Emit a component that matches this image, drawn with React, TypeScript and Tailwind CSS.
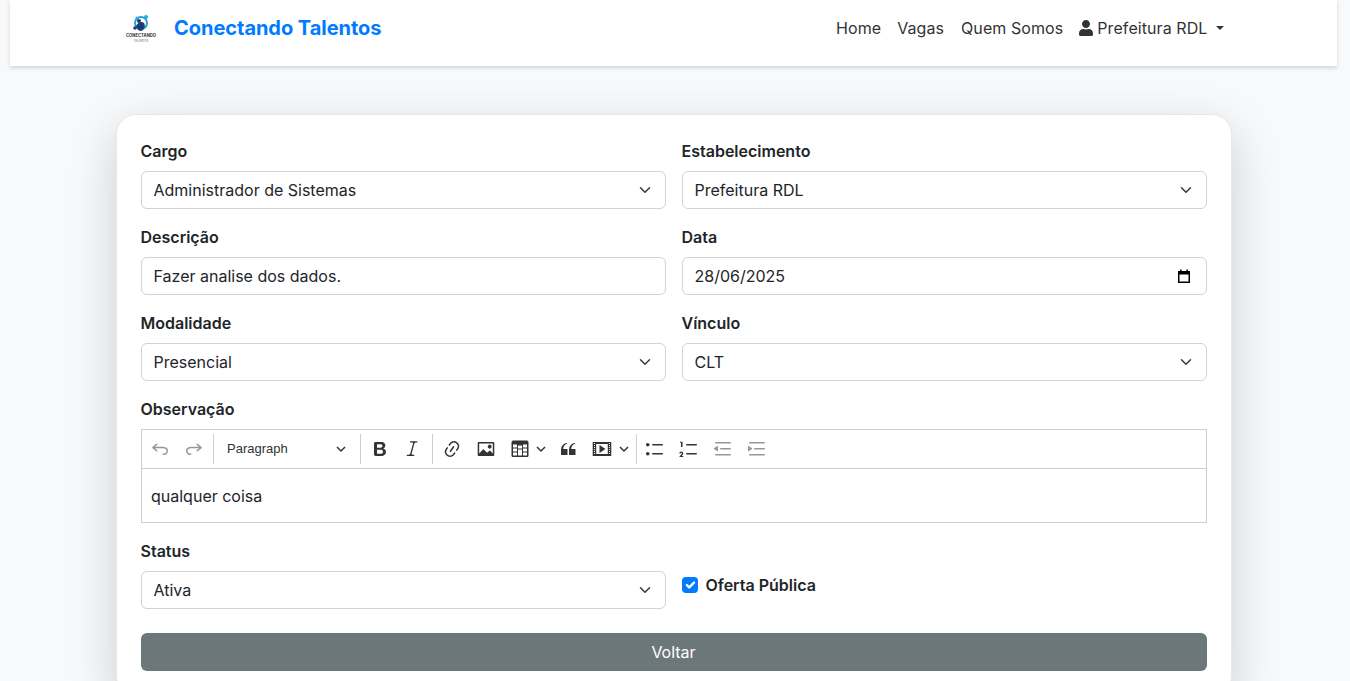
import { FaUser } from "react-icons/fa";

const P = {
  undo: "m5.042 9.367 2.189 1.837a.75.75 0 0 1-.965 1.149l-3.788-3.18a.747.747 0 0 1-.21-.284.75.75 0 0 1 .17-.945L6.23 4.762a.75.75 0 1 1 .964 1.15L4.863 7.866h8.917A.75.75 0 0 1 14 7.9a4 4 0 1 1-1.477 7.718l.344-1.489a2.5 2.5 0 1 0 1.094-4.73l.008-.032H5.042z",
  redo: "m14.958 9.367-2.189 1.837a.75.75 0 0 0 .965 1.149l3.788-3.18a.747.747 0 0 0 .21-.284.75.75 0 0 0-.17-.945L13.77 4.762a.75.75 0 1 0-.964 1.15l2.331 1.955H6.22A.75.75 0 0 0 6 7.9a4 4 0 1 0 1.477 7.718l-.344-1.489A2.5 2.5 0 1 1 6.039 9.4l-.008-.032h8.927z",
  bold: "M10.187 17H5.773c-.637 0-1.092-.138-1.364-.415-.273-.277-.409-.718-.409-1.323V4.738c0-.617.14-1.062.419-1.332.279-.27.73-.406 1.354-.406h4.68c.69 0 1.288.041 1.793.124.506.083.96.242 1.36.478.341.197.644.447.906.75a3.262 3.262 0 0 1 .808 2.162c0 1.401-.722 2.426-2.167 3.075C15.05 10.175 16 11.315 16 13.01a3.756 3.756 0 0 1-2.296 3.504 6.1 6.1 0 0 1-1.517.377c-.571.073-1.238.11-2 .11zm-.217-6.217H7v4.087h3.069c1.977 0 2.965-.69 2.965-2.072 0-.707-.256-1.22-.768-1.537-.512-.319-1.277-.478-2.296-.478zM7 5.13v3.619h2.606c.729 0 1.292-.067 1.69-.2a1.6 1.6 0 0 0 .91-.765c.165-.267.247-.566.247-.897 0-.707-.26-1.176-.778-1.409-.519-.232-1.31-.348-2.375-.348H7z",
  italic: "m9.586 14.633.021.004c-.036.335.095.655.393.962.082.083.173.15.274.201h1.474a.6.6 0 1 1 0 1.2H5.304a.6.6 0 0 1 0-1.2h1.15c.474-.07.809-.182 1.005-.334.196-.151.357-.316.483-.494.126-.178.23-.355.31-.531.08-.176.126-.29.14-.343l2.613-9.283a1.72 1.72 0 0 0 .011-.533c-.03-.235-.15-.443-.361-.623a.767.767 0 0 0-.376-.17H8.6a.6.6 0 1 1 0-1.2h6.295a.6.6 0 0 1 0 1.2h-1.1c-.59.057-.96.203-1.11.438-.15.234-.264.49-.34.768L9.586 14.633z",
  link: "m11.077 15 .991-1.416a.75.75 0 1 1 1.229.86l-1.148 1.64a.748.748 0 0 1-.217.206 5.251 5.251 0 0 1-8.503-5.955.741.741 0 0 1 .12-.274l1.147-1.639a.75.75 0 1 1 1.228.86L4.933 10.7l.006.003a3.75 3.75 0 0 0 6.132 4.294l.006.004zm5.494-5.335a.748.748 0 0 1-.12.274l-1.147 1.639a.75.75 0 1 1-1.228-.86l.86-1.23a3.75 3.75 0 0 0-6.144-4.301l-.86 1.229a.75.75 0 0 1-1.229-.86l1.148-1.64a.748.748 0 0 1 .217-.206 5.251 5.251 0 0 1 8.503 5.955zm-4.563-2.532a.75.75 0 0 1 .184 1.045l-3.155 4.505a.75.75 0 1 1-1.229-.86l3.155-4.506a.75.75 0 0 1 1.045-.184z",
  image: "M6.91 10.54c.26-.23.64-.21.88.03l3.36 3.14 2.23-2.06a.64.64 0 0 1 .87 0l2.52 2.97V4.5H3.2v10.12l3.71-4.08zm10.27-7.51c.6 0 1.09.47 1.09 1.05v11.84c0 .59-.49 1.06-1.09 1.06H2.79c-.6 0-1.09-.47-1.09-1.06V4.08c0-.58.49-1.05 1.1-1.05h14.38zm-5.22 5.56a1.96 1.96 0 1 1 3.4-1.96 1.96 1.96 0 0 1-3.4 1.96z",
  table: "M3 5.5v3h4v-3H3zm0 4v3h4v-3H3zm0 4v3h4v-3H3zm5 3h4v-3H8v3zm5 0h4v-3h-4v3zm4-4v-3h-4v3h4zm0-4v-3h-4v3h4zm1.5 8A1.5 1.5 0 0 1 17 18H3a1.5 1.5 0 0 1-1.5-1.5V3c.222-.863 1.068-1.5 2-1.5h13c.932 0 1.778.637 2 1.5v13.5zM12 13.5v-3H8v3h4zm0-4v-3H8v3h4z",
  quote: "M3 10.423a6.5 6.5 0 0 1 6.056-6.408l.038.67C6.448 5.423 5.354 7.663 5.22 10H9c.552 0 .5.432.5.986v4.511c0 .554-.448.503-1 .503h-5c-.552 0-.5-.449-.5-1.003v-4.574zm8 0a6.5 6.5 0 0 1 6.056-6.408l.038.67c-2.646.739-3.74 2.979-3.873 5.315H17c.552 0 .5.432.5.986v4.511c0 .554-.448.503-1 .503h-5c-.552 0-.5-.449-.5-1.003v-4.574z",
  media: "M18.68 3.03c.6 0 .59-.03.59.55v12.84c0 .59.01.56-.59.56H1.29c-.6 0-.59.03-.59-.56V3.58c0-.58-.01-.55.6-.55h17.38zM15.77 15V5H4.2v10h11.57zM2 4v1h1V4H2zm0 2v1h1V6H2zm0 2v1h1V8H2zm0 2v1h1v-1H2zm0 2v1h1v-1H2zm0 2v1h1v-1H2zm15-10v1h1V4h-1zm0 2v1h1V6h-1zm0 2v1h1V8h-1zm0 2v1h1v-1h-1zm0 2v1h1v-1h-1zm0 2v1h1v-1h-1zM7.5 6l6 4-6 4V6z",
  bullets: "M7 5.75c0 .414.336.75.75.75h9.5a.75.75 0 1 0 0-1.5h-9.5a.75.75 0 0 0-.75.75zm-6 0C1 4.784 1.777 4 2.75 4c.966 0 1.75.777 1.75 1.75 0 .966-.777 1.75-1.75 1.75C1.784 7.5 1 6.723 1 5.75zm6 9c0 .414.336.75.75.75h9.5a.75.75 0 1 0 0-1.5h-9.5a.75.75 0 0 0-.75.75zm-6 0c0-.966.777-1.75 1.75-1.75.966 0 1.75.777 1.75 1.75 0 .966-.777 1.75-1.75 1.75-.966 0-1.75-.777-1.75-1.75z",
  numbers: "M7 5.75c0 .414.336.75.75.75h9.5a.75.75 0 1 0 0-1.5h-9.5a.75.75 0 0 0-.75.75zM3.5 3v5H2V3.7H1v-1h2.5V3zM.343 17.857l2.59-3.257H2.92a.6.6 0 1 0-1.04 0H.302a2 2 0 1 1 3.995 0h-.001c-.048.405-.16.734-.333.988-.175.254-.59.692-1.244 1.312H4.3v1h-4l.043-.043zM7 14.75a.75.75 0 0 1 .75-.75h9.5a.75.75 0 1 1 0 1.5h-9.5a.75.75 0 0 1-.75-.75z",
  outdent: "M2 3.75c0 .414.336.75.75.75h14.5a.75.75 0 1 0 0-1.5H2.75a.75.75 0 0 0-.75.75zm5 6c0 .414.336.75.75.75h9.5a.75.75 0 1 0 0-1.5h-9.5a.75.75 0 0 0-.75.75zM2.75 16.5h14.5a.75.75 0 1 0 0-1.5H2.75a.75.75 0 1 0 0 1.5zm1.618-9.55L.98 9.358a.4.4 0 0 0 .013.661l3.39 2.207A.4.4 0 0 0 5 11.892V7.275a.4.4 0 0 0-.632-.326z",
  indent: "M2 3.75c0 .414.336.75.75.75h14.5a.75.75 0 1 0 0-1.5H2.75a.75.75 0 0 0-.75.75zm5 6c0 .414.336.75.75.75h9.5a.75.75 0 1 0 0-1.5h-9.5a.75.75 0 0 0-.75.75zM2.75 16.5h14.5a.75.75 0 1 0 0-1.5H2.75a.75.75 0 1 0 0 1.5zM1.632 6.95 5.02 9.358a.4.4 0 0 1-.013.661l-3.39 2.207A.4.4 0 0 1 1 11.892V7.275a.4.4 0 0 1 .632-.326z",
};

function Ck({ d, off }: { d: string; off?: boolean }) {
  return (
    <svg viewBox="0 0 20 20" className={off ? "w-5 h-5 fill-[#333333] opacity-50" : "w-5 h-5 fill-[#333333]"}>
      <path d={d} />
    </svg>
  );
}

function Cell({ d, w, off }: { d: string; w: string; off?: boolean }) {
  return (
    <div className={`${w} h-[38px] flex items-center justify-center shrink-0`}>
      <Ck d={d} off={off} />
    </div>
  );
}

function MiniChevron() {
  return (
    <svg viewBox="0 0 10 10" className="w-[10px] h-[10px] fill-none stroke-[#333333] stroke-[1.5]">
      <path d="M1 3l4 4 4-4" />
    </svg>
  );
}

function Sep() {
  return <div className="w-px h-[30px] bg-[#ccced1] shrink-0" />;
}

function Label({ children }: { children: string }) {
  return <label className="block h-6 mb-2 text-base leading-6 font-semibold text-[#212529]">{children}</label>;
}

function Chevron() {
  return (
    <span className="w-4 h-4 flex items-center justify-center">
      <svg viewBox="0 0 16 16" className="w-3 h-3 fill-none stroke-[#343a40] stroke-2">
        <path strokeLinecap="round" strokeLinejoin="round" d="m2 5 6 6 6-6" />
      </svg>
    </span>
  );
}

function Box({ children, right }: { children: string; right?: React.ReactNode }) {
  return (
    <div className="h-[38px] flex items-center justify-between pl-3 pr-3 bg-white border border-[#ced4da] rounded-[6px] text-base text-[#212529]">
      <span>{children}</span>
      {right}
    </div>
  );
}

function Field({ label, value, right }: { label: string; value: string; right?: React.ReactNode }) {
  return (
    <div>
      <Label>{label}</Label>
      <Box right={right}>{value}</Box>
    </div>
  );
}

function Logo() {
  return (
    <svg viewBox="0 0 32 32" className="w-8 h-8 shrink-0">
      <circle cx="16" cy="11" r="6" fill="none" stroke="#2a9fd6" strokeWidth="2" />
      <circle cx="21" cy="5" r="2" fill="#29abe2" />
      <circle cx="12" cy="6" r="1.6" fill="#29abe2" />
      <path d="M11 15c1-5 6-6 8-4 2 3 0 7-3 8-2 0-3-1-5-4z" fill="#1b3f73" />
      <circle cx="10" cy="16" r="1.8" fill="#1b3f73" />
      <circle cx="14" cy="9" r="2" fill="#1b3f73" />
      <text x="16" y="25" textAnchor="middle" fontSize="4.2" fontWeight="700" fill="#333333" fontFamily="Inter, sans-serif">CONECTANDO</text>
      <text x="16" y="29.5" textAnchor="middle" fontSize="2.8" fill="#666666" fontFamily="Inter, sans-serif">TALENTOS</text>
    </svg>
  );
}

export default function App() {
  return (
    <div className="min-h-screen bg-[#f8f9fa] font-[Inter,sans-serif] pl-[10px] pr-[13px]">
      <nav className="h-[66px] pb-[10px] bg-white shadow-[0_2px_4px_rgba(0,0,0,0.15)] flex items-center justify-between pl-[115px] pr-[105px]">
        <div className="flex items-center gap-[17px]">
          <Logo />
          <span className="text-[20px] font-bold text-[#007bff] tracking-[-0.04px]">Conectando Talentos</span>
        </div>
        <div className="flex items-center text-base text-[#333333] tracking-[0.08px]">
          <a className="px-2">Home</a>
          <a className="px-2">Vagas</a>
          <a className="px-2 ml-px">Quem Somos</a>
          <a className="px-2 flex items-center gap-[4px]">
            <FaUser className="w-[14px] h-4 text-[#333333]" />
            <span>Prefeitura RDL</span>
            <span className="ml-[4.5px] border-t-[4.8px] border-x-[4px] border-t-[#333333] border-x-transparent" />
          </a>
        </div>
      </nav>

      <main className="w-[1116px] mx-auto mt-12 bg-white border border-[#e5e7ea] rounded-[20px] p-6 shadow-[0_16px_48px_rgba(0,0,0,0.175)]">
        <div className="grid grid-cols-2 gap-x-4 gap-y-4">
          <Field label="Cargo" value="Administrador de Sistemas" right={<Chevron />} />
          <Field label="Estabelecimento" value="Prefeitura RDL" right={<Chevron />} />
          <Field label="Descrição" value="Fazer analise dos dados." />
          <Field
            label="Data"
            value="28/06/2025"
            right={
              <svg viewBox="0 0 16 16" className="w-[16px] h-[16px] mr-[2px]">
                <path fill="#000000" d="M2 3h2V1.5h1.5V3h5V1.5H12V3h2v12H2V3zm1.5 3.5v7h9v-7h-9z" />
              </svg>
            }
          />
          <Field label="Modalidade" value="Presencial" right={<Chevron />} />
          <Field label="Vínculo" value="CLT" right={<Chevron />} />

          <div className="col-span-2">
            <Label>Observação</Label>
            <div className="bg-white">
              <div className="h-10 border border-[#ccced1] flex items-center pl-[1.5px]">
                <Cell d={P.undo} w="w-[34px]" off />
                <Cell d={P.redo} w="w-[34px]" off />
                <div className="w-[2px] shrink-0" />
                <Sep />
                <div className="w-[146px] h-[38px] shrink-0 flex items-center justify-between pl-[13px] pr-[14px] font-['Liberation_Sans',sans-serif] text-[13px] text-[#333333]">
                  <span>Paragraph</span>
                  <MiniChevron />
                </div>
                <Sep />
                <div className="w-[3px] shrink-0" />
                <Cell d={P.bold} w="w-[32px]" />
                <Cell d={P.italic} w="w-[32px]" />
                <div className="w-[4px] shrink-0" />
                <Sep />
                <div className="w-[2px] shrink-0" />
                <Cell d={P.link} w="w-[34px]" />
                <Cell d={P.image} w="w-[34px]" />
                <div className="w-[48px] h-[38px] shrink-0 flex items-center justify-end pr-[5px] gap-[6px]">
                  <Ck d={P.table} />
                  <MiniChevron />
                </div>
                <Cell d={P.quote} w="w-[34px]" />
                <div className="w-[51px] h-[38px] shrink-0 flex items-center justify-end pr-[7px] gap-[7px]">
                  <Ck d={P.media} />
                  <MiniChevron />
                </div>
                <Sep />
                <div className="w-[1px] shrink-0" />
                <Cell d={P.bullets} w="w-[34px]" />
                <Cell d={P.numbers} w="w-[33px]" />
                <div className="w-[1px] shrink-0" />
                <Cell d={P.outdent} w="w-[34px]" off />
                <Cell d={P.indent} w="w-[34px]" off />
              </div>
              <div className="h-[54px] border-x border-b border-[#ccced1] flex items-center px-[9.5px] text-base text-[#212529]">
                qualquer coisa
              </div>
            </div>
          </div>

          <Field label="Status" value="Ativa" right={<Chevron />} />
          <div className="pt-[34px]">
            <div className="flex items-center h-6 gap-[8px]">
              <span className="w-4 h-4 rounded-[4px] bg-[#007bff] flex items-center justify-center">
                <svg viewBox="0 0 20 20" className="w-4 h-4 fill-none stroke-white stroke-[3]">
                  <path strokeLinecap="round" strokeLinejoin="round" d="m6 10 3 3 6-6" />
                </svg>
              </span>
              <span className="text-base font-semibold text-[#212529]">Oferta Pública</span>
            </div>
          </div>
        </div>

        <button className="block w-full h-[38px] mt-6 bg-[#6c777c] rounded-[6px] text-base text-white">Voltar</button>
      </main>
    </div>
  );
}
